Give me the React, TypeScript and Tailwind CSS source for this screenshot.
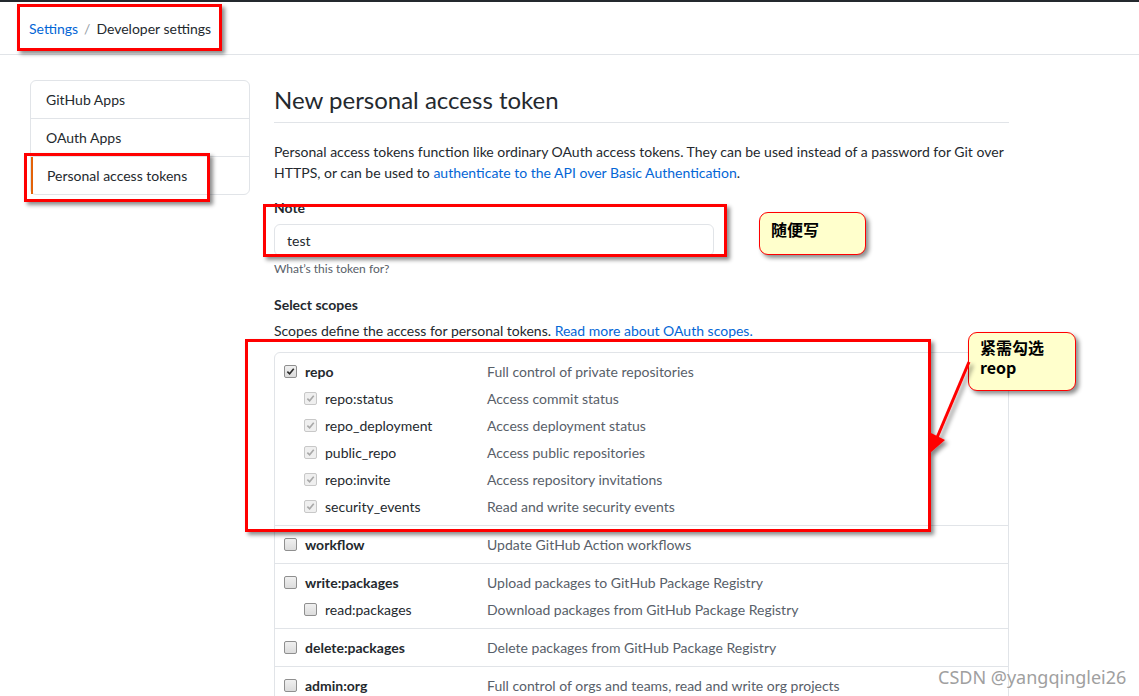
import React from "react";

const FONT = { fontFamily: 'Lato, "Noto Sans CJK SC", sans-serif' };

function Check({ checked, disabled }: { checked?: boolean; disabled?: boolean }) {
  return (
    <span
      className={
        "inline-flex h-[13px] w-[13px] shrink-0 items-center justify-center rounded-[2px] border " +
        (disabled ? "border-[#c8c8c8] bg-[#efefef]" : "border-[#8f8f8f] bg-gradient-to-b from-[#f0f0f0] to-[#dcdcdc]")
      }
    >
      {checked && (
        <svg viewBox="0 0 10 10" className="h-[9px] w-[9px]">
          <path
            d="M1.5 5.2 L4 7.6 L8.6 2"
            fill="none"
            stroke={disabled ? "#a8a8a8" : "#2b2b2b"}
            strokeWidth="1.8"
          />
        </svg>
      )}
    </span>
  );
}

type Row = { name: string; desc: string; child?: boolean; checked?: boolean };

const groups: Row[][] = [
  [
    { name: "repo", desc: "Full control of private repositories", checked: true },
    { name: "repo:status", desc: "Access commit status", child: true, checked: true },
    { name: "repo_deployment", desc: "Access deployment status", child: true, checked: true },
    { name: "public_repo", desc: "Access public repositories", child: true, checked: true },
    { name: "repo:invite", desc: "Access repository invitations", child: true, checked: true },
    { name: "security_events", desc: "Read and write security events", child: true, checked: true },
  ],
  [{ name: "workflow", desc: "Update GitHub Action workflows" }],
  [
    { name: "write:packages", desc: "Upload packages to GitHub Package Registry" },
    { name: "read:packages", desc: "Download packages from GitHub Package Registry", child: true },
  ],
  [{ name: "delete:packages", desc: "Delete packages from GitHub Package Registry" }],
  [{ name: "admin:org", desc: "Full control of orgs and teams, read and write org projects" }],
];

function RedBox({ className }: { className: string }) {
  return (
    <div
      className={
        "pointer-events-none absolute border-[3px] border-[#ff0000] shadow-[3px_3px_4px_rgba(0,0,0,0.45)] " +
        className
      }
    />
  );
}

export default function App() {
  return (
    <div className="relative h-[696px] w-[1139px] overflow-hidden bg-white text-[14px] text-[#24292e]" style={FONT}>
      <div className="h-[2px] bg-[#24292e]" />
      <div className="flex h-[53px] items-center border-b border-[#e1e4e8] pl-[29px]">
        <span className="text-[#0366d6]">Settings</span>
        <span className="mx-[6px] text-[#959da5]">/</span>
        <span>Developer settings</span>
      </div>

      <div className="flex pt-[25px]">
        <div className="ml-[30px] w-[220px]">
          <div className="rounded-[6px] border border-[#e1e4e8]">
            <div className="flex h-[38px] items-center border-b border-[#e1e4e8] pl-[15px]">GitHub Apps</div>
            <div className="flex h-[38px] items-center border-b border-[#e1e4e8] pl-[15px]">OAuth Apps</div>
            <div className="flex h-[37px] items-center border-l-2 border-[#e36209] pl-[14px]">Personal access tokens</div>
          </div>
        </div>

        <div className="ml-[24px] w-[735px]">
          <div className="flex h-[43px] items-end border-b border-[#e1e4e8] pb-[7px] text-[24px] leading-[30px]">
            New personal access token
          </div>
          <p className="mt-[18px] leading-[21px]">
            Personal access tokens function like ordinary OAuth access tokens. They can be used instead of a password for Git over HTTPS, or can be used to{" "}
            <span className="text-[#0366d6]">authenticate to the API over Basic Authentication</span>.
          </p>
          <div className="mt-[15px] font-bold leading-[20px]">Note</div>
          <div className="mt-[6px] flex h-[32px] w-[440px] items-center rounded-[6px] border border-[#e1e4e8] px-[12px]">test</div>
          <div className="mt-[5px] text-[12px] leading-[16px] text-[#586069]">What’s this token for?</div>
          <div className="mt-[18px] font-bold leading-[20px]">Select scopes</div>
          <div className="mt-[6px] leading-[20px]">
            Scopes define the access for personal tokens.{" "}
            <span className="text-[#0366d6]">Read more about OAuth scopes.</span>
          </div>
          <div className="mt-[11px] rounded-[6px] border border-[#e1e4e8]">
            {groups.map((g, gi) => (
              <div key={gi} className={"py-[5px] " + (gi > 0 ? "border-t border-[#e1e4e8]" : "")}>
                {g.map((r) => (
                  <div key={r.name} className="flex h-[27px] items-center">
                    <div className={"flex w-[212px] items-center " + (r.child ? "pl-[29px]" : "pl-[9px]")}>
                      <Check checked={r.checked} disabled={r.child && r.checked} />
                      <span className={"ml-[8px] " + (r.child ? "" : "font-bold")}>{r.name}</span>
                    </div>
                    <div className="text-[#586069]">{r.desc}</div>
                  </div>
                ))}
              </div>
            ))}
          </div>
        </div>
      </div>

      {/* annotations */}
      <RedBox className="left-[17px] top-[4px] h-[47px] w-[205px]" />
      <RedBox className="left-[24px] top-[153px] h-[49px] w-[186px]" />
      <RedBox className="left-[263px] top-[204px] h-[53px] w-[464px]" />
      <RedBox className="left-[245px] top-[339px] h-[193px] w-[686px]" />

      <div
        className="absolute left-[759px] top-[212px] h-[43px] w-[107px] rounded-[9px] border border-[#ff0000] bg-[#ffffcc] pl-[11px] pt-[5px] text-[16px] font-bold leading-[22px] text-black shadow-[3px_3px_4px_rgba(0,0,0,0.45)]"
        style={{ fontFamily: '"Noto Sans CJK SC", sans-serif' }}
      >
        随便写
      </div>
      <div
        className="absolute left-[968px] top-[332px] h-[59px] w-[108px] rounded-[9px] border border-[#ff0000] bg-[#ffffcc] pl-[11px] pt-[4px] text-[16px] font-bold leading-[20px] text-black shadow-[3px_3px_4px_rgba(0,0,0,0.45)]"
        style={{ fontFamily: '"Noto Sans CJK SC", sans-serif' }}
      >
        紧需勾选
        <br />
        reop
      </div>

      <svg className="pointer-events-none absolute left-0 top-0" width="1139" height="696">
        <defs>
          <filter id="sh" x="-50%" y="-50%" width="200%" height="200%">
            <feDropShadow dx="3" dy="3" stdDeviation="2" floodColor="#000" floodOpacity="0.45" />
          </filter>
        </defs>
        <g filter="url(#sh)">
          <line x1="969" y1="362" x2="936" y2="440" stroke="#ff0000" strokeWidth="3" />
          <polygon points="930,453 929,432 945,440" fill="#ff0000" />
        </g>
      </svg>

      <div
        className="absolute left-[938px] top-[665px] whitespace-nowrap text-[18px] leading-[24px] text-[#a0a0a0]"
        style={{ fontFamily: '"Noto Sans", sans-serif', textShadow: "0 0 2px #fff" }}
      >
        CSDN @yangqinglei26
      </div>
    </div>
  );
}
